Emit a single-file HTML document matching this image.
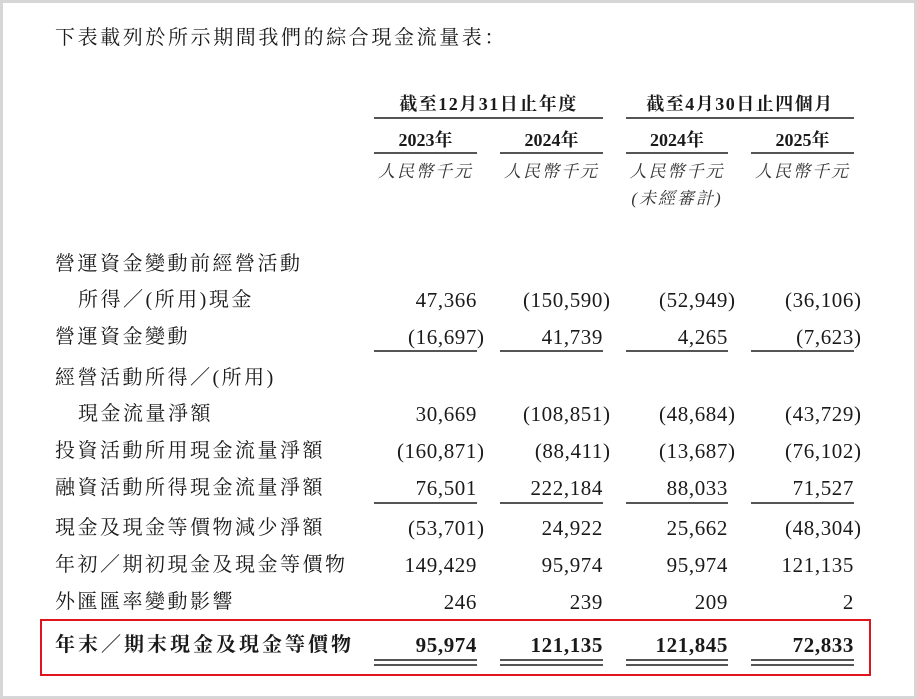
<!DOCTYPE html>
<html><head><meta charset="utf-8"><style>
html,body{margin:0;padding:0;}
body{width:917px;height:699px;position:relative;background:#fff;overflow:hidden;font-family:"Liberation Serif","Noto Serif CJK SC",serif;color:#1a1a1a;}
.frame{position:absolute;left:0;top:0;width:911px;height:693px;border:3px solid #d6d6d6;}
.t{position:absolute;white-space:nowrap;line-height:1;}
.lbl{font-size:20px;letter-spacing:2.5px;left:55px;}
.ind{left:78px;}
.n{position:absolute;font-size:21px;letter-spacing:0.6px;text-align:right;width:150px;line-height:1;white-space:nowrap;}
.n .p{position:absolute;left:100%;}
.hl{position:absolute;height:2px;background:#555;}
.b{font-weight:bold;}
.hd{font-size:18px;letter-spacing:1.5px;font-weight:bold;text-align:center;position:absolute;line-height:1;white-space:nowrap;}
.yr{font-size:18px;font-weight:bold;text-align:center;position:absolute;line-height:1;white-space:nowrap;}
.it{font-size:17px;font-style:italic;text-align:center;position:absolute;line-height:1;white-space:nowrap;color:#333;letter-spacing:2px;}
</style></head><body>
<div class="frame"></div>
<div class="t" style="left:55px;top:28px;font-size:20px;letter-spacing:2.6px;">下表載列於所示期間我們的綜合現金流量表：</div>

<div class="hd" style="left:374px;width:229px;top:95px;">截至12月31日止年度</div>
<div class="hd" style="left:626px;width:228px;top:95px;">截至4月30日止四個月</div>
<div class="hl" style="left:374px;width:229px;top:117px;"></div>
<div class="hl" style="left:626px;width:228px;top:117px;"></div>

<div class="yr" style="left:374px;width:103px;top:131px;">2023年</div>
<div class="yr" style="left:500px;width:103px;top:131px;">2024年</div>
<div class="yr" style="left:626px;width:102px;top:131px;">2024年</div>
<div class="yr" style="left:751px;width:103px;top:131px;">2025年</div>
<div class="hl" style="left:374px;width:103px;top:152px;"></div>
<div class="hl" style="left:500px;width:103px;top:152px;"></div>
<div class="hl" style="left:626px;width:102px;top:152px;"></div>
<div class="hl" style="left:751px;width:103px;top:152px;"></div>

<div class="it" style="left:374px;width:103px;top:163px;">人民幣千元</div>
<div class="it" style="left:500px;width:103px;top:163px;">人民幣千元</div>
<div class="it" style="left:626px;width:102px;top:163px;">人民幣千元</div>
<div class="it" style="left:751px;width:103px;top:163px;">人民幣千元</div>
<div class="it" style="left:626px;width:102px;top:190px;">(未經審計)</div>

<div class="t lbl" style="top:254px;">營運資金變動前經營活動</div>
<div class="t lbl ind" style="top:290px;">所得／(所用)現金</div>
<div class="t lbl" style="top:327px;">營運資金變動</div>
<div class="t lbl" style="top:368px;">經營活動所得／(所用)</div>
<div class="t lbl ind" style="top:404px;">現金流量淨額</div>
<div class="t lbl" style="top:441px;">投資活動所用現金流量淨額</div>
<div class="t lbl" style="top:478px;">融資活動所得現金流量淨額</div>
<div class="t lbl" style="top:518px;">現金及現金等價物減少淨額</div>
<div class="t lbl" style="top:555px;">年初／期初現金及現金等價物</div>
<div class="t lbl" style="top:592px;">外匯匯率變動影響</div>
<div class="t lbl b" style="top:635px;letter-spacing:3px;">年末／期末現金及現金等價物</div>

<div class="n" style="left:327px;top:290px;">47,366</div>
<div class="n" style="left:453px;top:290px;">(150,590<span class="p">)</span></div>
<div class="n" style="left:578px;top:290px;">(52,949<span class="p">)</span></div>
<div class="n" style="left:704px;top:290px;">(36,106<span class="p">)</span></div>

<div class="n" style="left:327px;top:327px;">(16,697<span class="p">)</span></div>
<div class="n" style="left:453px;top:327px;">41,739</div>
<div class="n" style="left:578px;top:327px;">4,265</div>
<div class="n" style="left:704px;top:327px;">(7,623<span class="p">)</span></div>
<div class="hl" style="left:374px;width:103px;top:350px;"></div>
<div class="hl" style="left:500px;width:103px;top:350px;"></div>
<div class="hl" style="left:626px;width:102px;top:350px;"></div>
<div class="hl" style="left:751px;width:103px;top:350px;"></div>

<div class="n" style="left:327px;top:404px;">30,669</div>
<div class="n" style="left:453px;top:404px;">(108,851<span class="p">)</span></div>
<div class="n" style="left:578px;top:404px;">(48,684<span class="p">)</span></div>
<div class="n" style="left:704px;top:404px;">(43,729<span class="p">)</span></div>

<div class="n" style="left:327px;top:441px;">(160,871<span class="p">)</span></div>
<div class="n" style="left:453px;top:441px;">(88,411<span class="p">)</span></div>
<div class="n" style="left:578px;top:441px;">(13,687<span class="p">)</span></div>
<div class="n" style="left:704px;top:441px;">(76,102<span class="p">)</span></div>

<div class="n" style="left:327px;top:478px;">76,501</div>
<div class="n" style="left:453px;top:478px;">222,184</div>
<div class="n" style="left:578px;top:478px;">88,033</div>
<div class="n" style="left:704px;top:478px;">71,527</div>
<div class="hl" style="left:374px;width:103px;top:502px;"></div>
<div class="hl" style="left:500px;width:103px;top:502px;"></div>
<div class="hl" style="left:626px;width:102px;top:502px;"></div>
<div class="hl" style="left:751px;width:103px;top:502px;"></div>

<div class="n" style="left:327px;top:518px;">(53,701<span class="p">)</span></div>
<div class="n" style="left:453px;top:518px;">24,922</div>
<div class="n" style="left:578px;top:518px;">25,662</div>
<div class="n" style="left:704px;top:518px;">(48,304<span class="p">)</span></div>

<div class="n" style="left:327px;top:555px;">149,429</div>
<div class="n" style="left:453px;top:555px;">95,974</div>
<div class="n" style="left:578px;top:555px;">95,974</div>
<div class="n" style="left:704px;top:555px;">121,135</div>

<div class="n" style="left:327px;top:592px;">246</div>
<div class="n" style="left:453px;top:592px;">239</div>
<div class="n" style="left:578px;top:592px;">209</div>
<div class="n" style="left:704px;top:592px;">2</div>

<div style="position:absolute;left:40px;top:619px;width:827px;height:53px;border:2px solid #e0141c;"></div>
<div class="n b" style="left:327px;top:635px;">95,974</div>
<div class="n b" style="left:453px;top:635px;">121,135</div>
<div class="n b" style="left:578px;top:635px;">121,845</div>
<div class="n b" style="left:704px;top:635px;">72,833</div>
<div class="hl" style="left:374px;width:103px;top:659px;"></div>
<div class="hl" style="left:500px;width:103px;top:659px;"></div>
<div class="hl" style="left:626px;width:102px;top:659px;"></div>
<div class="hl" style="left:751px;width:103px;top:659px;"></div>
<div class="hl" style="left:374px;width:103px;top:664px;"></div>
<div class="hl" style="left:500px;width:103px;top:664px;"></div>
<div class="hl" style="left:626px;width:102px;top:664px;"></div>
<div class="hl" style="left:751px;width:103px;top:664px;"></div>
</body></html>
